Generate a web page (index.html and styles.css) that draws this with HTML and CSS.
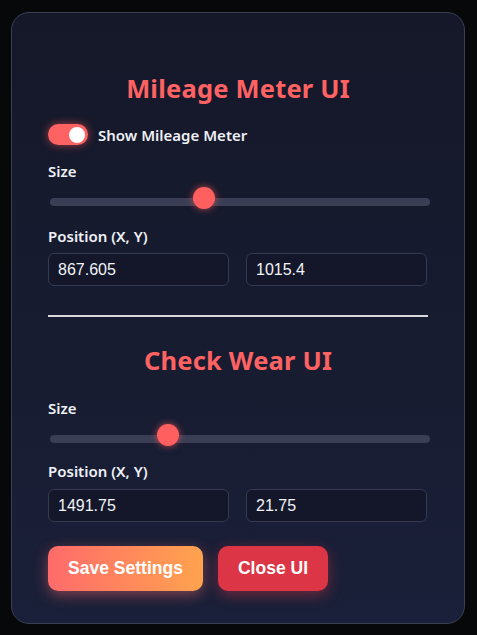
FILE: index.html
```html
<!DOCTYPE html>
<html>
<head>
<meta charset="utf-8">
<link rel="stylesheet" href="styles.css">
</head>
<body>
<div class="panel">
  <h2 class="title">Mileage Meter UI</h2>
  <label class="toggle-row">
    <span class="toggle"><span class="knob"></span></span>
    <span class="toggle-label">Show Mileage Meter</span>
  </label>
  <div class="label label-size1">Size</div>
  <div class="slider"><div class="track"></div><div class="thumb" style="left: 41%"></div></div>
  <div class="label label-pos1">Position (X, Y)</div>
  <div class="inputs">
    <div class="input">867.605</div>
    <div class="input">1015.4</div>
  </div>
  <hr class="divider">
  <h2 class="title title2">Check Wear UI</h2>
  <div class="label label-size2">Size</div>
  <div class="slider"><div class="track"></div><div class="thumb" style="left: 31.6%"></div></div>
  <div class="label label-pos2">Position (X, Y)</div>
  <div class="inputs inputs2">
    <div class="input">1491.75</div>
    <div class="input">21.75</div>
  </div>
  <div class="buttons">
    <button class="btn save">Save Settings</button>
    <button class="btn close">Close UI</button>
  </div>
</div>
</body>
</html>
```
FILE: styles.css
```css
html, body { margin: 0; padding: 0; }
body {
  background: #07080a;
  width: 477px;
  height: 635px;
  overflow: hidden;
  font-family: "Noto Sans", "Open Sans", sans-serif;
  padding: 12px 0 0 11px;
  box-sizing: border-box;
}
.panel {
  width: 454px;
  height: 612px;
  box-sizing: border-box;
  border: 1px solid #3a3f54;
  border-radius: 18px;
  background: linear-gradient(180deg, #151829 0%, #171c31 60%, #1a2039 100%);
  padding: 59px 36px 0 36px;
  display: flex;
  flex-direction: column;
}
.title {
  margin: 0;
  text-align: center;
  color: #ff6262;
  font-size: 25.5px;
  font-weight: 700;
  line-height: 32px;
  letter-spacing: 0.2px;
}
.title2 { margin-top: 27px; }
.toggle-row {
  display: flex;
  align-items: center;
  gap: 10px;
  margin-top: 20px;
  height: 21px;
}
.toggle {
  width: 40px;
  height: 21px;
  border-radius: 11px;
  background: #ff6262;
  box-shadow: 0 0 8px rgba(255, 90, 90, 0.6);
  position: relative;
  display: block;
}
.knob {
  position: absolute;
  right: 3px;
  top: 2.5px;
  width: 16px;
  height: 16px;
  border-radius: 50%;
  background: #fff;
}
.toggle-label, .label {
  color: #eef0f5;
  font-size: 15px;
  font-weight: 600;
}
.label { line-height: 20px; }
.label-size1 { margin-top: 16px; }
.label-pos1 { margin-top: 17px; }
.label-size2 { margin-top: 22px; }
.label-pos2 { margin-top: 15px; }
.slider {
  position: relative;
  height: 22px;
  margin-top: 6px;
}
.track {
  position: absolute;
  left: 2px; right: -2px;
  top: 11px;
  height: 8px;
  border-radius: 4px;
  background: #3a3e54;
}
.thumb {
  position: absolute;
  top: 0;
  width: 22px;
  height: 22px;
  margin-left: -11px;
  border-radius: 50%;
  background: #ff5f5f;
  box-shadow: 0 0 7px rgba(255, 90, 90, 0.7);
}
.inputs {
  display: grid;
  grid-template-columns: 181px 181px;
  gap: 17px;
  margin-top: 7px;
}
.inputs2 { margin-top: 8px; }
.input {
  height: 33px;
  box-sizing: border-box;
  border: 1px solid #353a50;
  border-radius: 6px;
  background: #131729;
  color: #f2f3f7;
  font-family: "Liberation Sans", Arial, sans-serif;
  font-size: 16px;
  line-height: 31px;
  padding-left: 9px;
}
.divider {
  margin: 29px 0 0 0;
  border: none;
  height: 2px;
  background: #d7d8de;
}
.buttons {
  display: flex;
  gap: 15px;
  margin-top: 24px;
}
.btn {
  height: 45px;
  border: none;
  border-radius: 10px;
  color: #fff;
  font-family: "Liberation Sans", Arial, sans-serif;
  font-size: 17.5px;
  font-weight: 700;
  padding: 0;
}
.save {
  width: 155px;
  background: linear-gradient(90deg, #ff6b6b, #ffa34e);
  box-shadow: 0 4px 14px rgba(255, 107, 107, 0.45);
}
.close {
  width: 110px;
  background: #dc3545;
  box-shadow: 0 4px 14px rgba(220, 53, 69, 0.45);
}
```
